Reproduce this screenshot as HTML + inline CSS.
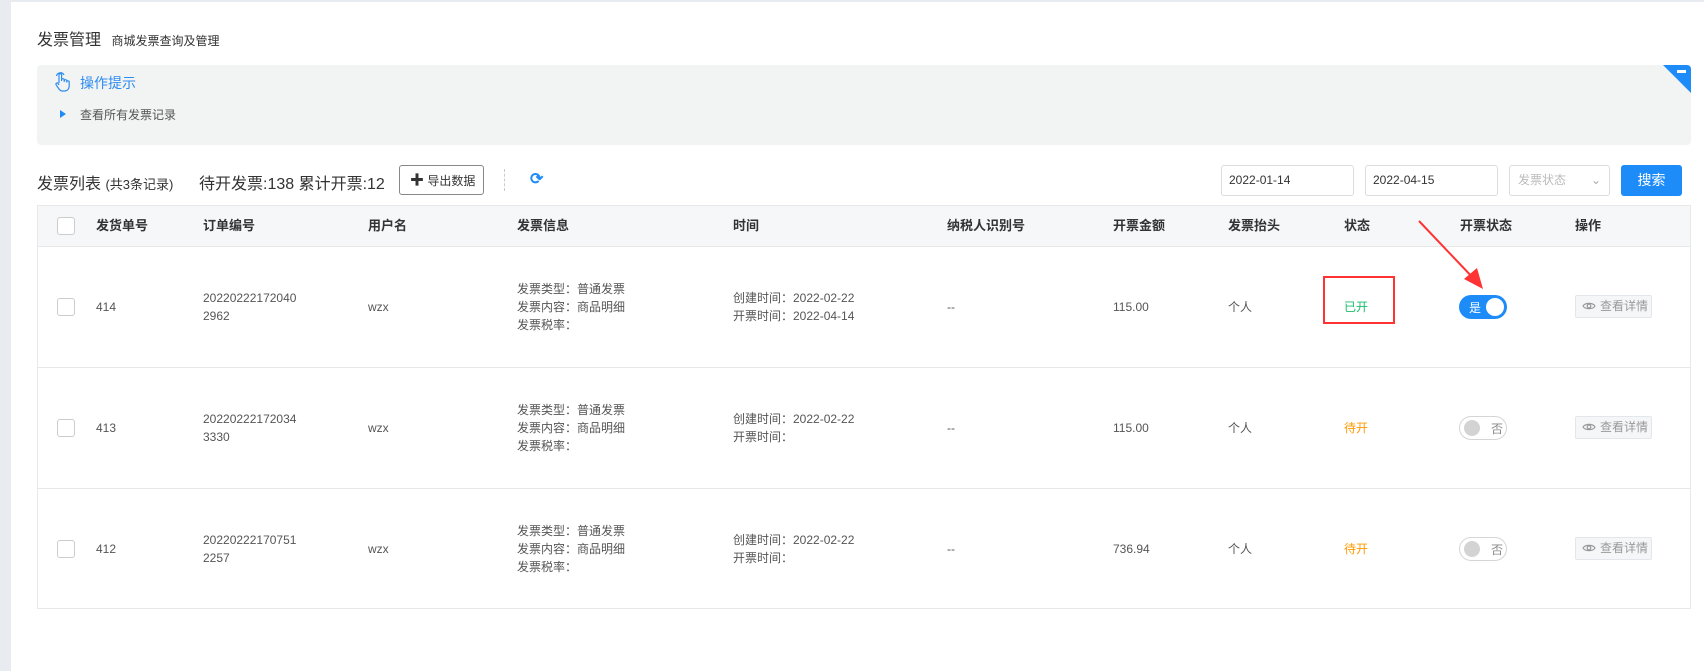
<!DOCTYPE html>
<html><head><meta charset="utf-8"><style>
*{margin:0;padding:0;box-sizing:border-box}
body{width:1704px;height:671px;position:relative;background:#fff;font-family:"Liberation Sans","Noto Sans CJK SC",sans-serif;color:#333;overflow:hidden}
.a{position:absolute;white-space:nowrap}
.th{position:absolute;top:205px;height:42px;line-height:42px;font-size:13px;font-weight:bold;color:#333}
.cb{position:absolute;width:18px;height:18px;border:1px solid #ccc;border-radius:3px;background:#fff}
.c{position:absolute;font-size:12px;color:#555;line-height:18px;white-space:nowrap}
.btn{position:absolute;left:1575px;width:77px;height:23px;border:1px solid #e3e6ea;background:#f5f6f8;border-radius:2px;font-size:12px;color:#999;line-height:21px;padding-left:24px}
.btn svg{position:absolute;left:6px;top:5px}
.tg{position:absolute;left:1459px;width:48px;height:24px;border-radius:12px}
</style></head><body>
<div class="a" style="left:0;top:0;width:11px;height:671px;background:#e8ebef"></div>
<div class="a" style="left:0;top:0;width:1704px;height:2px;background:#e8ebef"></div>
<div class="a" style="left:37px;top:26px;font-size:16px;color:#333">发票管理 <span style="font-size:12px;margin-left:6px">商城发票查询及管理</span></div>
<div class="a" style="left:37px;top:65px;width:1654px;height:80px;background:#f2f3f3;border-radius:4px;overflow:hidden">
 <div class="a" style="right:0;top:0;width:0;height:0;border-top:28px solid #1e8cf8;border-left:28px solid transparent"></div>
 <div class="a" style="right:5px;top:5px;width:9px;height:3px;background:#fff"></div>
</div>
<svg class="a" style="left:54px;top:71px" width="16" height="22" viewBox="0 0 16 22" fill="none" stroke="#2d8cf0" stroke-width="1.2"><path d="M5 12V4a1.3 1.3 0 0 1 2.6 0v6M7.6 9a1.3 1.3 0 0 1 2.6 0v2M10.2 10a1.3 1.3 0 0 1 2.6 0v1.5M12.8 11a1.2 1.2 0 0 1 2.4 0v4c0 3-2 5-4.5 5H8c-2 0-3-2-4.5-4L2 13.5a1.2 1.2 0 0 1 2-1.2L5 14M2.5 5a4 4 0 0 1 7.5 -1"/></svg>
<div class="a" style="left:80px;top:73px;font-size:14px;color:#2d8cf0">操作提示</div>
<div class="a" style="left:60px;top:110px;width:0;height:0;border-left:6px solid #1e8cf8;border-top:4px solid transparent;border-bottom:4px solid transparent"></div>
<div class="a" style="left:80px;top:106px;font-size:12px;color:#555">查看所有发票记录</div>
<div class="a" style="left:37px;top:170px;font-size:16px;color:#333">发票列表 <span style="font-size:13px">(共3条记录)</span></div>
<div class="a" style="left:199px;top:170px;font-size:16px;color:#333">待开发票:138 累计开票:12</div>
<div class="a" style="left:399px;top:165px;width:85px;height:30px;border:1px solid #888;border-radius:3px;font-size:12px;line-height:28px;padding-left:10px;color:#333"><b style="font-size:14px">✚</b> 导出数据</div>
<div class="a" style="left:504px;top:169px;height:22px;border-left:1px dashed #ccc"></div>
<div class="a" style="left:530px;top:169px;font-size:16px;color:#1e8cf8;font-weight:bold">⟳</div>
<div class="a" style="left:1221px;top:165px;width:133px;height:31px;border:1px solid #ddd;border-radius:3px;font-size:12px;line-height:29px;padding-left:7px">2022-01-14</div>
<div class="a" style="left:1365px;top:165px;width:133px;height:31px;border:1px solid #ddd;border-radius:3px;font-size:12px;line-height:29px;padding-left:7px">2022-04-15</div>
<div class="a" style="left:1509px;top:165px;width:101px;height:31px;border:1px solid #ddd;border-radius:3px;font-size:12px;line-height:29px;padding-left:8px;color:#bbb">发票状态<span style="position:absolute;right:8px;color:#aaa">⌄</span></div>
<div class="a" style="left:1621px;top:165px;width:61px;height:31px;background:#1e8cf8;border-radius:3px;font-size:14px;line-height:31px;text-align:center;color:#fff">搜索</div>
<div class="a" style="left:37px;top:205px;width:1654px;height:404px;border:1px solid #e8e8e8"></div>
<div class="a" style="left:38px;top:206px;width:1652px;height:41px;background:#f6f7f9;border-bottom:1px solid #e8e8e8"></div>
<div class="a" style="left:38px;top:367px;width:1652px;border-top:1px solid #e8e8e8"></div>
<div class="a" style="left:38px;top:488px;width:1652px;border-top:1px solid #e8e8e8"></div>
<div class="cb" style="left:57px;top:217px"></div>
<div class="th" style="left:96px">发货单号</div><div class="th" style="left:203px">订单编号</div><div class="th" style="left:368px">用户名</div><div class="th" style="left:517px">发票信息</div><div class="th" style="left:733px">时间</div><div class="th" style="left:947px">纳税人识别号</div><div class="th" style="left:1113px">开票金额</div><div class="th" style="left:1228px">发票抬头</div><div class="th" style="left:1344px">状态</div><div class="th" style="left:1460px">开票状态</div><div class="th" style="left:1575px">操作</div>

<div class="cb" style="left:57px;top:298px"></div>
<div class="c" style="left:96px;top:298px">414</div>
<div class="c" style="left:203px;top:289px">20220222172040<br>2962</div>
<div class="c" style="left:368px;top:298px">wzx</div>
<div class="c" style="left:517px;top:280px">发票类型：普通发票<br>发票内容：商品明细<br>发票税率：</div>
<div class="c" style="left:733px;top:289px">创建时间：2022-02-22<br>开票时间：2022-04-14</div>
<div class="c" style="left:947px;top:298px">--</div>
<div class="c" style="left:1113px;top:298px">115.00</div>
<div class="c" style="left:1228px;top:298px">个人</div>
<div class="c" style="left:1344px;top:298px;color:#19be6b">已开</div>
<div class="a" style="left:1323px;top:276px;width:72px;height:48px;border:2px solid #f33"></div>
<div class="tg" style="top:295px;background:#1e8cf8"><span class="a" style="left:10px;top:4px;font-size:12px;color:#fff">是</span><span class="a" style="right:3px;top:3px;width:18px;height:18px;border-radius:50%;background:#fff"></span></div>
<div class="btn" style="top:295px"><svg width="14" height="10" viewBox="0 0 14 10" fill="none" stroke="#999" stroke-width="1.2"><path d="M1 5C3 1.5 11 1.5 13 5C11 8.5 3 8.5 1 5Z"/><circle cx="7" cy="5" r="1.8"/></svg>查看详情</div>
<svg class="a" style="left:1410px;top:215px" width="80" height="80"><line x1="9" y1="6" x2="66" y2="66" stroke="#f33" stroke-width="2"/><polygon points="73,74 54,64 67,53" fill="#f33"/></svg>

<div class="cb" style="left:57px;top:419px"></div>
<div class="c" style="left:96px;top:419px">413</div>
<div class="c" style="left:203px;top:410px">20220222172034<br>3330</div>
<div class="c" style="left:368px;top:419px">wzx</div>
<div class="c" style="left:517px;top:401px">发票类型：普通发票<br>发票内容：商品明细<br>发票税率：</div>
<div class="c" style="left:733px;top:410px">创建时间：2022-02-22<br>开票时间：</div>
<div class="c" style="left:947px;top:419px">--</div>
<div class="c" style="left:1113px;top:419px">115.00</div>
<div class="c" style="left:1228px;top:419px">个人</div>
<div class="c" style="left:1344px;top:419px;color:#f90">待开</div>
<div class="tg" style="top:416px;border:1px solid #d5d5d5;background:#fff"><span class="a" style="left:4px;top:3px;width:16px;height:16px;border-radius:50%;background:#d3d3d3"></span><span class="a" style="left:31px;top:3px;font-size:12px;color:#888">否</span></div>
<div class="btn" style="top:416px"><svg width="14" height="10" viewBox="0 0 14 10" fill="none" stroke="#999" stroke-width="1.2"><path d="M1 5C3 1.5 11 1.5 13 5C11 8.5 3 8.5 1 5Z"/><circle cx="7" cy="5" r="1.8"/></svg>查看详情</div>

<div class="cb" style="left:57px;top:540px"></div>
<div class="c" style="left:96px;top:540px">412</div>
<div class="c" style="left:203px;top:531px">20220222170751<br>2257</div>
<div class="c" style="left:368px;top:540px">wzx</div>
<div class="c" style="left:517px;top:522px">发票类型：普通发票<br>发票内容：商品明细<br>发票税率：</div>
<div class="c" style="left:733px;top:531px">创建时间：2022-02-22<br>开票时间：</div>
<div class="c" style="left:947px;top:540px">--</div>
<div class="c" style="left:1113px;top:540px">736.94</div>
<div class="c" style="left:1228px;top:540px">个人</div>
<div class="c" style="left:1344px;top:540px;color:#f90">待开</div>
<div class="tg" style="top:537px;border:1px solid #d5d5d5;background:#fff"><span class="a" style="left:4px;top:3px;width:16px;height:16px;border-radius:50%;background:#d3d3d3"></span><span class="a" style="left:31px;top:3px;font-size:12px;color:#888">否</span></div>
<div class="btn" style="top:537px"><svg width="14" height="10" viewBox="0 0 14 10" fill="none" stroke="#999" stroke-width="1.2"><path d="M1 5C3 1.5 11 1.5 13 5C11 8.5 3 8.5 1 5Z"/><circle cx="7" cy="5" r="1.8"/></svg>查看详情</div>
</body></html>
